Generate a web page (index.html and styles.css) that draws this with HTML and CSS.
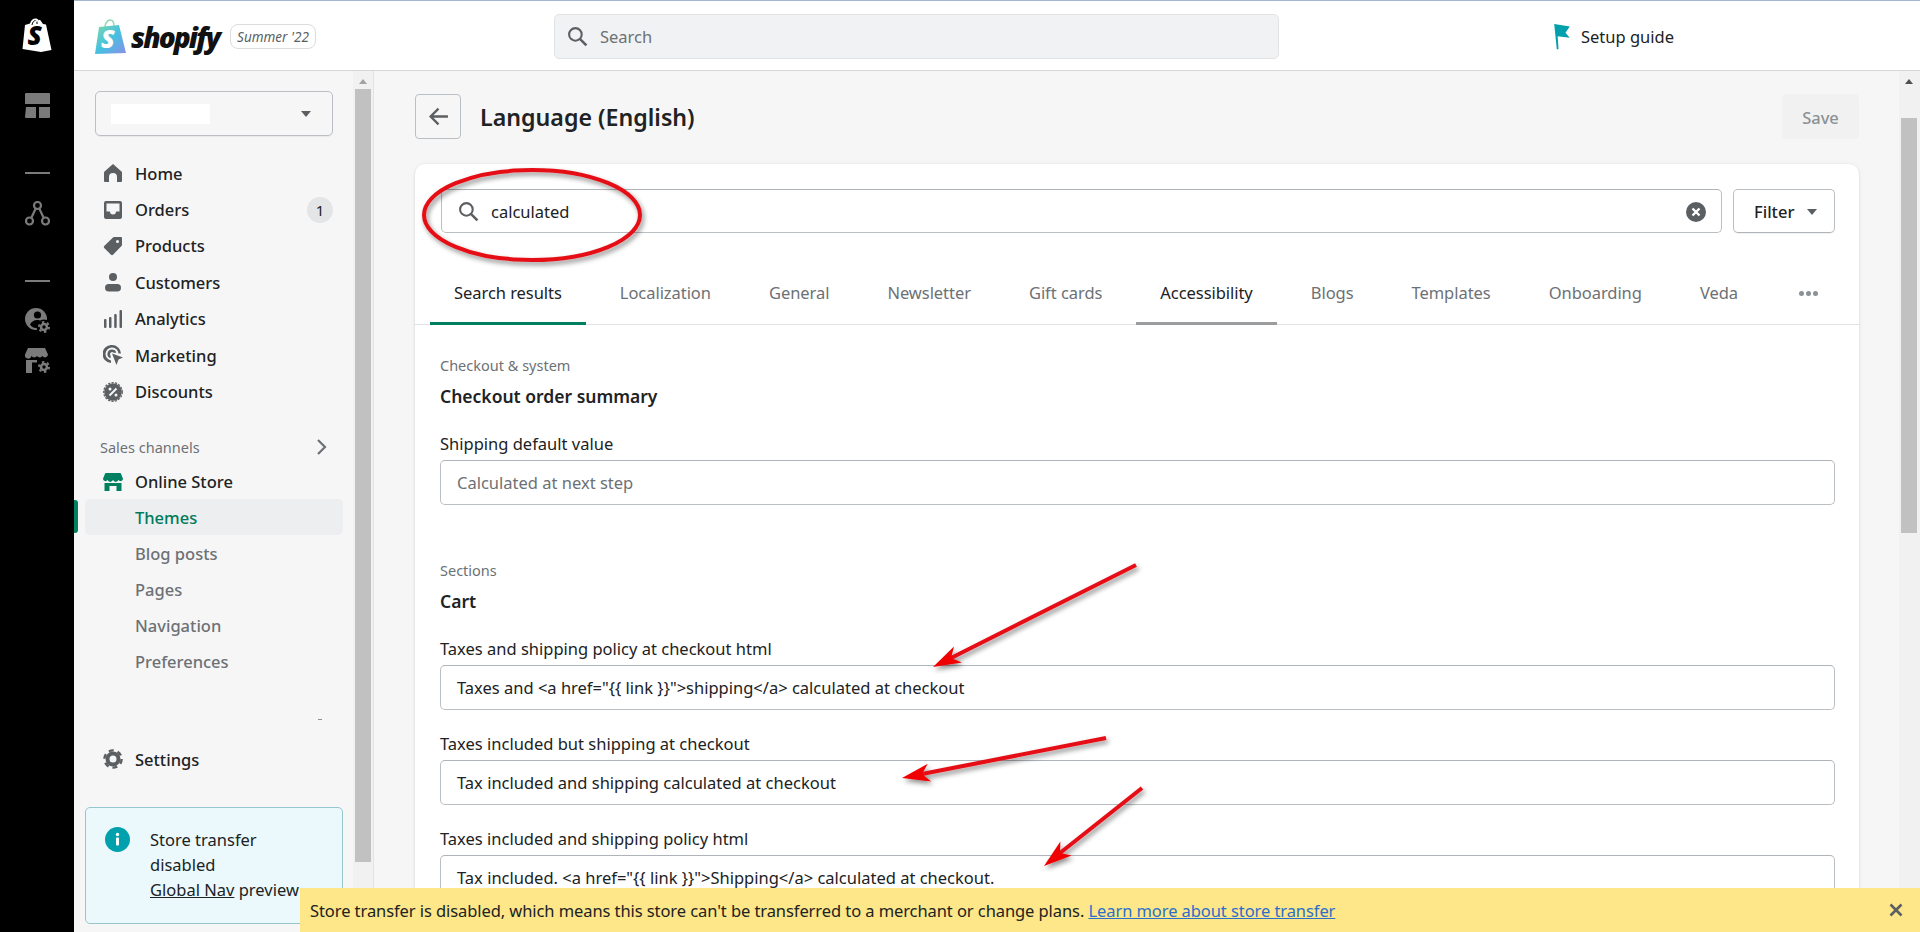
FILE: index.html
```html
<!DOCTYPE html>
<html lang="en">

<head>
    <meta charset="UTF-8">
    <title>Language (English)</title>
    <link rel="stylesheet" href="styles.css">
</head>

<body>
    <div class="app">
        <!-- black rail -->
        <div class="rail">
            <svg class="rail-logo" viewBox="0 0 30 34">
                <path d="M3 7l5-1.500C9 2 11 .5 13.500.5c1.500 0 2.500.7 3 1.700l1.500-.4L21 6l3 .5L29.500 32 19 34 .5 31z" fill="#fff" />
                <path d="M10 7c.5-3 2-4.500 3.500-4.500M15 6V3.500" fill="none" stroke="#000" stroke-width="1" />
                <text x="5.500" y="27" class="rail-logo-s">S</text>
            </svg>
            <svg class="rail-icon first" viewBox="0 0 25 25">
                <path d="M1 0h23a1 1 0 0 1 1 1v10H0V1a1 1 0 0 1 1-1zM1 14h10v11H1a1 1 0 0 1-1-1zM14 14h11v10a1 1 0 0 1-1 1H14z" fill="#7b7b7b" />
            </svg>
            <div class="rail-dash"></div>
            <svg class="rail-icon" viewBox="0 0 25 25">
                <g fill="none" stroke="#7b7b7b" stroke-width="2.200">
                    <circle cx="12.500" cy="4.500" r="3.500" />
                    <circle cx="4.500" cy="20" r="3.500" />
                    <circle cx="20.500" cy="20" r="3.500" />
                    <path d="M10.500 8l-4 8.500M14.500 8l4 8.500" />
                </g>
            </svg>
            <div class="rail-dash second"></div>
            <svg class="rail-icon" viewBox="0 0 25 25">
                <circle cx="11" cy="11" r="11" fill="#7b7b7b" />
                <circle cx="12.500" cy="7" r="3.600" fill="#000" />
                <path d="M5 16.500c1.500-3 4-4.500 7-4.500s3 .5 4 1.500L12 20c-3 .5-5.500-1-7-3.500z" fill="#000" />
                <circle cx="19" cy="19" r="7.500" fill="#000" />
                <circle cx="19" cy="19" r="3" fill="none" stroke="#7b7b7b" stroke-width="2.600" />
                <circle cx="19" cy="19" r="5" fill="none" stroke="#7b7b7b" stroke-width="2" stroke-dasharray="2.400 2.800" />
            </svg>
            <svg class="rail-icon store" viewBox="0 0 25 25">
                <path d="M3 0h17l3 6.500a3 3 0 0 1-5.500 1.500 3.400 3.400 0 0 1-5.500 0 3.400 3.400 0 0 1-5.500 0A3 3 0 0 1 0 6.500z" fill="#7b7b7b" />
                <path d="M1 12h11v2.500H7V25H1z" fill="#7b7b7b" />
                <circle cx="19" cy="19" r="3" fill="none" stroke="#7b7b7b" stroke-width="2.600" />
                <circle cx="19" cy="19" r="5" fill="none" stroke="#7b7b7b" stroke-width="2" stroke-dasharray="2.400 2.800" />
            </svg>
        </div>

        <div class="workspace">
            <!-- top bar -->
            <div class="topbar">
                <div class="brand">
                    <svg class="brand-bag" viewBox="0 0 32 36">
                        <defs>
                            <linearGradient id="bagGrad" x1="0" y1="0" x2="1" y2="1">
                                <stop offset="0" stop-color="#7fd9a8" />
                                <stop offset="0.5" stop-color="#45c1e0" />
                                <stop offset="1" stop-color="#8a8fe8" />
                            </linearGradient>
                        </defs>
                        <path d="M10 8c0-4 3-7 5-7s4 2 4 6" fill="none" stroke="#8ed8b0" stroke-width="1.500" />
                        <path d="M4 8l20-2 7 28-31 1z" fill="url(#bagGrad)" />
                        <text x="6" y="29" class="brand-bag-s">S</text>
                    </svg>
                    <span class="brand-name">shopify</span>
                    <span class="brand-tag">Summer '22</span>
                </div>
                <div class="topsearch">
                    <svg class="icon-search" viewBox="0 0 20 20"><circle cx="8" cy="8" r="6" fill="none" stroke="#5c5f62" stroke-width="2" /><path d="M12.500 12.500L18.500 18.500" stroke="#5c5f62" stroke-width="2.400" /></svg>
                    <span>Search</span>
                </div>
                <div class="setup">
                    <svg class="setup-flag" viewBox="0 0 18 30"><path d="M0 0l18 3-5 7 5 6-14-2 1 15H3z" fill="#00a0ac" /></svg>
                    <span>Setup guide</span>
                </div>
            </div>

            <div class="below">
                <!-- left nav -->
                <div class="sidebar">
                    <div class="store-select">
                        <div class="store-name"></div>
                        <div class="caret"></div>
                    </div>
                    <div class="nav-item"><svg class="nav-icon" viewBox="0 0 20 20"><path d="M10 1l8.500 7.500a2 2 0 0 1 .5 1.300V18a1 1 0 0 1-1 1h-4v-5a4 4 0 0 0-8 0v5H2a1 1 0 0 1-1-1V9.800a2 2 0 0 1 .5-1.300z" /></svg>Home</div>
                    <div class="nav-item"><svg class="nav-icon" viewBox="0 0 20 20"><path d="M3 1h14a2 2 0 0 1 2 2v14a2 2 0 0 1-2 2H3a2 2 0 0 1-2-2V3a2 2 0 0 1 2-2zm.5 2.500v8H7a3 3 0 0 0 6 0h3.500v-8z" /></svg>Orders<span class="count">1</span></div>
                    <div class="nav-item"><svg class="nav-icon" viewBox="0 0 20 20"><path d="M11 1h7a1 1 0 0 1 1 1v7a1.500 1.500 0 0 1-.5 1L10 18.800a1.500 1.500 0 0 1-2 0L1.200 12a1.500 1.500 0 0 1 0-2L10 1.500A1.500 1.500 0 0 1 11 1zm3.500 3a1.500 1.500 0 1 0 0 3 1.500 1.500 0 0 0 0-3z" /></svg>Products</div>
                    <div class="nav-item"><svg class="nav-icon" viewBox="0 0 20 20"><circle cx="10" cy="5" r="4" /><rect x="2" y="12" width="16" height="7.500" rx="3.750" /></svg>Customers</div>
                    <div class="nav-item"><svg class="nav-icon" viewBox="0 0 20 20"><rect x="1" y="10" width="2.500" height="9" rx="1" /><rect x="6" y="8" width="2.500" height="11" rx="1" /><rect x="11.200" y="5" width="2.500" height="14" rx="1" /><rect x="16.500" y="1" width="2.500" height="18" rx="1" /></svg>Analytics</div>
                    <div class="nav-item"><svg class="nav-icon" viewBox="0 0 20 20"><path d="M9 0a9 9 0 0 1 9 8.500h-2.500A6.500 6.500 0 1 0 8 15.400V18A9 9 0 0 1 9 0z" /><path d="M9 4.500a4.500 4.500 0 0 1 4.300 3.300h-2.700A2 2 0 1 0 7.600 10.700v2.600A4.500 4.500 0 0 1 9 4.500z" /><path d="M9 8.500l11 4-4.500 2L13.500 20z" /></svg>Marketing</div>
                    <div class="nav-item"><svg class="nav-icon" viewBox="0 0 20 20"><circle cx="10" cy="10" r="8.800" /><circle cx="10" cy="10" r="9.300" fill="none" stroke="#5c5f62" stroke-width="1.200" stroke-dasharray="2.200 1.300" /><path d="M6.500 13.500l7-7" stroke="#f6f6f7" stroke-width="2" /><circle cx="7" cy="7" r="1.500" fill="#f6f6f7" /><circle cx="13" cy="13" r="1.500" fill="#f6f6f7" /></svg>Discounts</div>

                    <div class="channels">
                        <span>Sales channels</span>
                        <svg class="chevron" viewBox="0 0 12 18"><path d="M2 2l7 7-7 7" fill="none" stroke="#6d7175" stroke-width="2.200" /></svg>
                    </div>
                    <div class="nav-item store-item"><svg class="nav-icon green" viewBox="0 0 20 20"><path d="M3 1h14a1 1 0 0 1 1 .7l2 5a2.500 2.500 0 0 1-4.500 1.400 3 3 0 0 1-5.500 0 3 3 0 0 1-5.500 0A2.500 2.500 0 0 1 0 6.700l2-5A1 1 0 0 1 3 1z" /><path d="M1.500 11H18.500v8h-5v-5h-7v5h-5z" /></svg>Online Store</div>
                    <div class="sub-item active">Themes</div>
                    <div class="sub-item">Blog posts</div>
                    <div class="sub-item">Pages</div>
                    <div class="sub-item">Navigation</div>
                    <div class="sub-item">Preferences</div>
                    <div class="tiny-dash"></div>
                    <div class="nav-item settings"><svg class="nav-icon" viewBox="0 0 20 20"><circle cx="10" cy="10" r="5.500" fill="none" stroke="#5c5f62" stroke-width="4" /><circle cx="10" cy="10" r="8.600" fill="none" stroke="#5c5f62" stroke-width="2.400" stroke-dasharray="5 4" /></svg>Settings</div>
                    <div class="transfer-note">
                        <svg class="note-icon" viewBox="0 0 25 25"><circle cx="12.500" cy="12.500" r="12.500" fill="#00a0ac" /><rect x="11" y="10.500" width="3" height="8" rx="1" fill="#fff" /><circle cx="12.500" cy="7.500" r="1.700" fill="#fff" /></svg>
                        <div class="note-text">Store transfer<br>disabled<br><u>Global Nav</u> preview</div>
                    </div>
                </div>
                <div class="side-scroll">
                    <div class="side-arrow"></div>
                    <div class="side-thumb"></div>
                </div>

                <!-- main content -->
                <div class="main">
                    <div class="page-head">
                        <div class="back-btn">
                            <svg viewBox="0 0 20 20" class="back-icon"><path d="M19 10H3M10 2.500L2.500 10l7.500 7.500" fill="none" stroke="#5c5f62" stroke-width="2.200" /></svg>
                        </div>
                        <h1>Language (English)</h1>
                        <div class="save-btn">Save</div>
                    </div>

                    <div class="card">
                        <div class="search-row">
                            <div class="search-field">
                                <svg class="icon-search" viewBox="0 0 20 20"><circle cx="8" cy="8" r="6" fill="none" stroke="#5c5f62" stroke-width="2" /><path d="M12.500 12.500L18.500 18.500" stroke="#5c5f62" stroke-width="2.400" /></svg>
                                <span class="search-value">calculated</span>
                                <svg class="clear-icon" viewBox="0 0 20 20"><circle cx="10" cy="10" r="10" fill="#5c5f62" /><path d="M6.500 6.500l7 7M13.500 6.500l-7 7" stroke="#fff" stroke-width="2.400" /></svg>
                            </div>
                            <div class="filter-btn">Filter<span class="caret small"></span></div>
                        </div>

                        <div class="tabs">
                            <div class="tab selected">Search results</div>
                            <div class="tab">Localization</div>
                            <div class="tab">General</div>
                            <div class="tab">Newsletter</div>
                            <div class="tab">Gift cards</div>
                            <div class="tab hovered">Accessibility</div>
                            <div class="tab">Blogs</div>
                            <div class="tab">Templates</div>
                            <div class="tab">Onboarding</div>
                            <div class="tab">Veda</div>
                            <div class="tab-more"><i></i><i></i><i></i></div>
                        </div>

                        <div class="section">
                            <div class="eyebrow">Checkout &amp; system</div>
                            <h2>Checkout order summary</h2>
                            <label class="field-label">Shipping default value</label>
                            <div class="field placeholder">Calculated at next step</div>
                        </div>

                        <div class="section">
                            <div class="eyebrow">Sections</div>
                            <h2>Cart</h2>
                            <label class="field-label">Taxes and shipping policy at checkout html</label>
                            <div class="field">Taxes and &lt;a href="{{ link }}"&gt;shipping&lt;/a&gt; calculated at checkout</div>
                            <label class="field-label">Taxes included but shipping at checkout</label>
                            <div class="field">Tax included and shipping calculated at checkout</div>
                            <label class="field-label">Taxes included and shipping policy html</label>
                            <div class="field">Tax included. &lt;a href="{{ link }}"&gt;Shipping&lt;/a&gt; calculated at checkout.</div>
                        </div>
                    </div>
                </div>

                <div class="page-scroll">
                    <div class="page-arrow"></div>
                    <div class="page-thumb"></div>
                </div>
            </div>
        </div>
    </div>

    <!-- yellow notice over the bottom of the page -->
    <div class="notice">
        <span>Store transfer is disabled, which means this store can't be transferred to a merchant or change plans. <a href="#">Learn more about store transfer</a></span>
        <svg class="notice-close" viewBox="0 0 14 14"><path d="M1.500 1.500l11 11M12.500 1.500l-11 11" stroke="#5c5f62" stroke-width="2.600" /></svg>
    </div>

    <!-- red marks drawn on top of the screenshot -->
    <svg class="marks" viewBox="0 0 1920 932">
        <defs>
            <filter id="markShadow" x="-20%" y="-20%" width="140%" height="140%">
                <feDropShadow dx="2" dy="3" stdDeviation="2.500" flood-color="#000" flood-opacity="0.45" />
            </filter>
        </defs>
        <g filter="url(#markShadow)">
            <ellipse cx="532" cy="215" rx="108" ry="45" fill="none" stroke="#e50f14" stroke-width="4" />
            <path d="M1136 565L951 658M1106 738L922 774M1142 788L1060 853" stroke="#e50f14" stroke-width="4" fill="none" />
            <path d="M933 667L962 662.400 951 658 954 646.400zM902 778L931.200 781.400 922 774 927.800 763.800zM1044 866L1071.600 855.600 1060 853 1060.400 841.400z" fill="#f00000" />
        </g>
    </svg>
</body>

</html>
```
FILE: styles.css
```css
* {
    margin: 0;
    padding: 0;
    box-sizing: border-box;
}

html,
body {
    height: 932px;
    overflow: hidden;
}

body {
    position: relative;
    font-family: "Noto Sans", Arial, sans-serif;
    font-size: 16.5px;
    color: #202223;
    background: #f6f6f7;
}

.app {
    display: flex;
    height: 932px;
}

/* Black rail */
.rail {
    width: 74px;
    flex: none;
    background: #000;
    display: flex;
    flex-direction: column;
    align-items: center;
}

.rail-logo {
    width: 30px;
    height: 34px;
    margin-top: 18px;
}

.rail-logo-s {
    font-family: "Open Sans", sans-serif;
    font-weight: 800;
    font-style: italic;
    font-size: 26px;
    fill: #000;
}

.rail-icon {
    width: 25px;
    height: 25px;
    display: block;
}

.rail-icon.first {
    margin-top: 41px;
}

.rail-icon.store {
    margin-top: 15px;
}

.rail-dash {
    width: 25px;
    height: 2px;
    background: #7b7b7b;
    margin: 54px 0 27px;
}

.rail-dash.second {
    margin: 54px 0 26px;
}

.workspace {
    flex: 1;
    min-width: 0;
    display: flex;
    flex-direction: column;
}

/* Top bar */
.topbar {
    height: 71px;
    flex: none;
    background: #fff;
    border-top: 1px solid #a6b5d0;
    border-bottom: 1px solid #d5d6d8;
    padding-top: 2px;
    display: flex;
    align-items: center;
}

.brand {
    width: 480px;
    flex: none;
    display: flex;
    align-items: center;
    padding-left: 21px;
}

.brand-bag {
    width: 32px;
    height: 36px;
}

.brand-bag-s {
    font-family: "Open Sans", sans-serif;
    font-weight: 800;
    font-style: italic;
    font-size: 25px;
    fill: #fff;
}

.brand-name {
    font-family: "Open Sans", sans-serif;
    font-weight: 800;
    font-style: italic;
    font-size: 28px;
    letter-spacing: -1.9px;
    color: #111;
    margin-left: 4px;
    line-height: 36px;
}

.brand-tag {
    font-style: italic;
    font-size: 13.5px;
    color: #5c5f62;
    border: 1px solid #dcdcdc;
    border-radius: 8px;
    height: 25px;
    width: 86px;
    margin-left: 11px;
    display: flex;
    align-items: center;
    justify-content: center;
}

.topsearch {
    width: 725px;
    height: 45px;
    flex: none;
    background: #f1f2f3;
    border: 1px solid #e1e3e5;
    border-radius: 5px;
    display: flex;
    align-items: center;
    padding-left: 12px;
    color: #6d7175;
}

.icon-search {
    width: 21px;
    height: 21px;
    flex: none;
    margin-right: 12px;
}

.setup {
    display: flex;
    align-items: center;
    margin-left: 274px;
    color: #202223;
}

.setup-flag {
    width: 18px;
    height: 26px;
    margin-right: 10px;
}

/* Left nav */
.below {
    flex: 1;
    min-height: 0;
    display: flex;
}

.sidebar {
    width: 279px;
    flex: none;
    padding: 20px 10px 0 11px;
    display: flex;
    flex-direction: column;
    background: #f6f6f7;
}

.store-select {
    height: 45px;
    margin: 0 10px 19px 10px;
    border: 1px solid #bbbfc3;
    border-radius: 5px;
    box-shadow: 0 1px 0 rgba(0, 0, 0, 0.05);
    display: flex;
    align-items: center;
    justify-content: space-between;
    padding: 0 21px 0 15px;
}

.store-name {
    width: 99px;
    height: 20px;
    background: #fff;
}

.caret {
    width: 0;
    height: 0;
    border-left: 5px solid transparent;
    border-right: 5px solid transparent;
    border-top: 6px solid #5c5f62;
}

.caret.small {
    display: inline-block;
    margin-left: 13px;
    vertical-align: 3px;
    border-top-color: #5c5f62;
}

.nav-item {
    height: 36.4px;
    display: flex;
    align-items: center;
    padding-left: 18px;
    font-weight: 500;
    color: #202223;
    position: relative;
}

.nav-icon {
    width: 20px;
    height: 20px;
    margin-right: 12px;
    fill: #5c5f62;
    flex: none;
}

.nav-icon.green {
    fill: #008060;
}

.count {
    margin-left: auto;
    margin-right: 10px;
    width: 26px;
    height: 26px;
    border-radius: 50%;
    background: #e4e5e7;
    font-size: 15px;
    font-weight: 400;
    display: flex;
    align-items: center;
    justify-content: center;
}

.channels {
    display: flex;
    align-items: center;
    justify-content: space-between;
    height: 22px;
    margin-top: 26px;
    padding: 0 15px 0 15px;
    font-size: 14.5px;
    color: #6d7175;
}

.chevron {
    width: 12px;
    height: 18px;
}

.store-item {
    height: 34.5px;
    margin-top: 7px;
}

.sub-item {
    height: 36px;
    display: flex;
    align-items: center;
    padding-left: 50px;
    font-weight: 500;
    color: #6d7175;
    border-radius: 5px;
    position: relative;
}

.sub-item.active {
    background: #edeeef;
    color: #007a5c;
}

.sub-item.active::before {
    content: "";
    position: absolute;
    left: -11px;
    top: 1px;
    width: 4px;
    height: 33px;
    background: #008060;
    border-radius: 0 3px 3px 0;
}

.tiny-dash {
    width: 4px;
    height: 1px;
    background: #8c9196;
    margin: 40px 0 0 233px;
}

.settings {
    margin-top: 21px;
}

.transfer-note {
    height: 117px;
    margin-top: 29px;
    background: #ebf9fc;
    border: 1px solid #98c6cd;
    border-radius: 5px;
    padding: 19px 0 0 19px;
    display: flex;
    overflow: hidden;
}

.note-icon {
    width: 25px;
    height: 25px;
    flex: none;
    margin-right: 20px;
}

.note-text {
    line-height: 25px;
    white-space: nowrap;
    margin-top: 0;
}

.side-scroll {
    width: 21px;
    flex: none;
    border-right: 1px solid #e3e3e3;
    background: #f1f1f1;
    padding: 0 2px;
}

.side-arrow {
    width: 0;
    height: 0;
    margin: 8px auto 5px;
    border-left: 4px solid transparent;
    border-right: 4px solid transparent;
    border-bottom: 5px solid #a3a3a3;
}

.side-thumb {
    height: 773px;
    background: #c1c1c1;
}

/* Main column */
.main {
    flex: 1;
    min-width: 0;
    padding: 23px 40px 0 41px;
    overflow: hidden;
}

.page-head {
    display: flex;
    align-items: center;
    height: 45px;
    margin-bottom: 25px;
}

.back-btn {
    width: 46px;
    height: 45px;
    border: 1px solid #babfc3;
    border-radius: 4px;
    display: flex;
    align-items: center;
    justify-content: center;
}

.back-icon {
    width: 21px;
    height: 21px;
}

h1 {
    font-size: 23.2px;
    font-weight: 600;
    margin-left: 19px;
}

.save-btn {
    margin-left: auto;
    width: 77px;
    height: 45px;
    border-radius: 4px;
    background: #f1f1f1;
    color: #8c9196;
    font-weight: 500;
    padding-top: 2px;
    display: flex;
    align-items: center;
    justify-content: center;
}

.card {
    background: #fff;
    border-radius: 10px 10px 0 0;
    box-shadow: 0 0 5px rgba(23, 24, 24, 0.05), 0 1px 2px rgba(0, 0, 0, 0.15);
    padding-bottom: 60px;
}

.search-row {
    display: flex;
    padding: 25px 24px 0 26px;
    gap: 11px;
}

.search-field {
    flex: 1;
    height: 44px;
    border: 1px solid #babfc3;
    border-top-color: #aeb4b9;
    border-radius: 5px;
    display: flex;
    align-items: center;
    padding: 1px 15px 0 16px;
}

.search-value {
    flex: 1;
}

.clear-icon {
    width: 20px;
    height: 20px;
}

.filter-btn {
    width: 102px;
    height: 44px;
    border: 1px solid #babfc3;
    border-bottom-color: #aeb4b9;
    border-radius: 5px;
    box-shadow: 0 1px 0 rgba(0, 0, 0, 0.05);
    font-weight: 500;
    display: flex;
    align-items: center;
    padding-left: 20px;
}

.filter-btn .caret {
    margin-top: 2px;
}

/* Tabs */
.tabs {
    display: flex;
    height: 60px;
    margin-top: 32px;
    padding-left: 15px;
    gap: 10px;
    border-bottom: 1px solid #e1e3e5;
    letter-spacing: -0.05px;
}

.tab {
    height: 60px;
    padding: 0 24px 3px;
    display: flex;
    align-items: center;
    color: #6d7175;
    border-bottom: 3px solid transparent;
}

.tab.selected {
    color: #202223;
    border-bottom-color: #008060;
}

.tab.hovered {
    color: #202223;
    border-bottom-color: #9a9c9e;
}

.tab-more {
    display: flex;
    gap: 2px;
    align-items: center;
    margin-left: 27px;
    padding-bottom: 3px;
}

.tab-more i {
    width: 5px;
    height: 5px;
    border-radius: 50%;
    background: #8c9196;
}

/* Translation fields */
.section {
    padding: 30px 24px 0 25px;
}

.section + .section {
    padding-top: 55px;
}

.eyebrow {
    font-size: 14.5px;
    line-height: 20px;
    color: #6d7175;
}

h2 {
    font-size: 17.5px;
    font-weight: 600;
    line-height: 24px;
    margin-top: 9px;
}

.field-label {
    display: block;
    line-height: 22px;
    margin: 23px 0 5px;
}

h2 + .field-label {
    margin-top: 25px;
}

.field {
    height: 45px;
    border: 1px solid #babfc3;
    border-top-color: #aeb4b9;
    border-radius: 5px;
    display: flex;
    align-items: center;
    padding-left: 16px;
    background: #fff;
}

.field.placeholder {
    color: #6d7175;
}

/* Page scrollbar */
.page-scroll {
    width: 21px;
    flex: none;
    background: #f1f1f1;
    padding: 0 3px 0 2px;
}

.page-arrow {
    width: 0;
    height: 0;
    margin: 8px auto 0;
    border-left: 4px solid transparent;
    border-right: 4px solid transparent;
    border-bottom: 5px solid #505050;
}

.page-thumb {
    height: 415px;
    margin-top: 34px;
    background: #c1c1c1;
}

/* Yellow notice */
.notice {
    position: absolute;
    left: 300px;
    right: 0;
    bottom: 0;
    height: 44px;
    background: #fde788;
    display: flex;
    align-items: center;
    justify-content: space-between;
    padding: 0 17px 0 10px;
    letter-spacing: -0.08px;
}

.notice a {
    color: #2c6ecb;
}

.notice-close {
    width: 14px;
    height: 14px;
}

/* Red annotation layer */
.marks {
    position: absolute;
    left: 0;
    top: 0;
    width: 1920px;
    height: 932px;
    pointer-events: none;
}
```
